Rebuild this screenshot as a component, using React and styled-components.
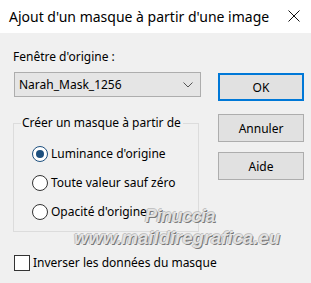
import React from "react";
import styled, { createGlobalStyle } from "styled-components";

const Global = createGlobalStyle`
  html, body {
    margin: 0;
    padding: 0;
    background: #f0f0f0;
  }
  body {
    font-family: "Noto Sans", "Open Sans", sans-serif;
  }
`;

const Window = styled.div`
  position: relative;
  width: 311px;
  height: 283px;
  background: #f0f0f0;
  overflow: hidden;
  color: #000;
`;

const TitleBar = styled.div`
  height: 33px;
  background: #fff;
  display: flex;
  align-items: center;
  justify-content: space-between;
  padding: 0 11px 0 9px;
`;

const Title = styled.div`
  font-size: 14px;
  white-space: nowrap;
  margin-top: -1px;
`;

const Close = styled.svg`
  width: 12px;
  height: 12px;
  margin-top: -2px;
`;

const Body = styled.div`
  display: flex;
  padding: 0 7px 0 13px;
`;

const Left = styled.div`
  width: 188px;
  display: flex;
  flex-direction: column;
  white-space: nowrap;
`;

const Right = styled.div`
  margin-left: 17px;
  padding-top: 40px;
  display: flex;
  flex-direction: column;
`;

const Label = styled.div`
  font-size: 12px;
  line-height: 16px;
  margin-top: 16px;
`;

const Combo = styled.div`
  margin: 7px 0 0 1px;
  width: 187px;
  height: 25px;
  box-sizing: border-box;
  background: #e5e5e5;
  border: 1px solid #adadad;
  display: flex;
  align-items: center;
  justify-content: space-between;
  padding: 0 7px 0 4px;
  font-size: 12px;
`;

const Group = styled.fieldset`
  margin: 18px 0 0 0;
  min-width: 0;
  width: 186px;
  height: 117px;
  box-sizing: border-box;
  border: 1px solid #dcdcdc;
  padding: 0;
`;

const Legend = styled.legend`
  font-size: 12px;
  line-height: 16px;
  padding: 0 2px 0 1px;
  margin-left: 7px;
  white-space: nowrap;
`;

const Options = styled.div`
  padding: 15px 0 0 18px;
  display: flex;
  flex-direction: column;
  gap: 13px;
`;

const Option = styled.label`
  display: flex;
  align-items: center;
  gap: 3px;
  font-size: 12px;
  line-height: 16px;
`;

const Radio = styled.span`
  flex-shrink: 0;
  width: 16px;
  height: 16px;
  box-sizing: border-box;
  border-radius: 50%;
  border: 1px solid ${(p) => (p.$on ? "#1c4f7e" : "#333")};
  background: #fff;
  display: flex;
  align-items: center;
  justify-content: center;
  &::after {
    content: "";
    width: 8px;
    height: 8px;
    border-radius: 50%;
    background: ${(p) => (p.$on ? "#1c4f7e" : "transparent")};
  }
`;

const Check = styled.label`
  margin: 23px 0 0 1px;
  display: flex;
  align-items: center;
  gap: 3px;
  font-size: 12px;
  line-height: 16px;
`;

const Box = styled.span`
  flex-shrink: 0;
  width: 16px;
  height: 16px;
  box-sizing: border-box;
  border: 1px solid #333;
  background: #fff;
`;

const Button = styled.div`
  width: 86px;
  height: 28px;
  box-sizing: border-box;
  background: #e1e1e1;
  border: ${(p) => (p.$primary ? "2px solid #0078d7" : "1px solid #adadad")};
  display: flex;
  align-items: center;
  justify-content: center;
  font-size: 12px;
  margin-bottom: ${(p) => p.$gap}px;
`;

const Mark = styled.div`
  position: absolute;
  left: ${(p) => p.$x}px;
  top: ${(p) => p.$y}px;
  font-family: "Liberation Sans", Arial, sans-serif;
  font-weight: bold;
  font-style: italic;
  font-size: ${(p) => p.$size}px;
  letter-spacing: ${(p) => p.$ls}px;
  line-height: 1;
  white-space: nowrap;
  color: rgba(232, 232, 232, 0.95);
  text-shadow: 1px 1px 0 rgba(100, 100, 100, 0.85), -1px 0 0 rgba(150, 150, 150, 0.5),
    0 -1px 0 rgba(150, 150, 150, 0.5);
  pointer-events: none;
`;

const Chevron = () => (
  <svg width="10" height="6" viewBox="0 0 10 6">
    <path d="M0.5 0.5 L5 5 L9.5 0.5" fill="none" stroke="#555" strokeWidth="1" />
  </svg>
);

export default function App() {
  return (
    <Window>
      <Global />
      <TitleBar>
        <Title>Ajout d'un masque à partir d'une image</Title>
        <Close viewBox="0 0 12 12">
          <path d="M0.5 0.5 L11.5 11.5 M11.5 0.5 L0.5 11.5" stroke="#111" strokeWidth="1" />
        </Close>
      </TitleBar>
      <Body>
        <Left>
          <Label>Fenêtre d'origine :</Label>
          <Combo>
            <span>Narah_Mask_1256</span>
            <Chevron />
          </Combo>
          <Group>
            <Legend>Créer un masque à partir de</Legend>
            <Options>
              <Option>
                <Radio $on />
                Luminance d'origine
              </Option>
              <Option>
                <Radio />
                Toute valeur sauf zéro
              </Option>
              <Option>
                <Radio />
                Opacité d'origine
              </Option>
            </Options>
          </Group>
          <Check>
            <Box />
            Inverser les données du masque
          </Check>
        </Left>
        <Right>
          <Button $primary $gap={13}>OK</Button>
          <Button $gap={10}>Annuler</Button>
          <Button $gap={0}>Aide</Button>
        </Right>
      </Body>
      <Mark $x={145} $y={207} $size={18} $ls={-0.5}>Pinuccia</Mark>
      <Mark $x={74} $y={229} $size={18.5} $ls={0}>www.maildiregrafica.eu</Mark>
    </Window>
  );
}
